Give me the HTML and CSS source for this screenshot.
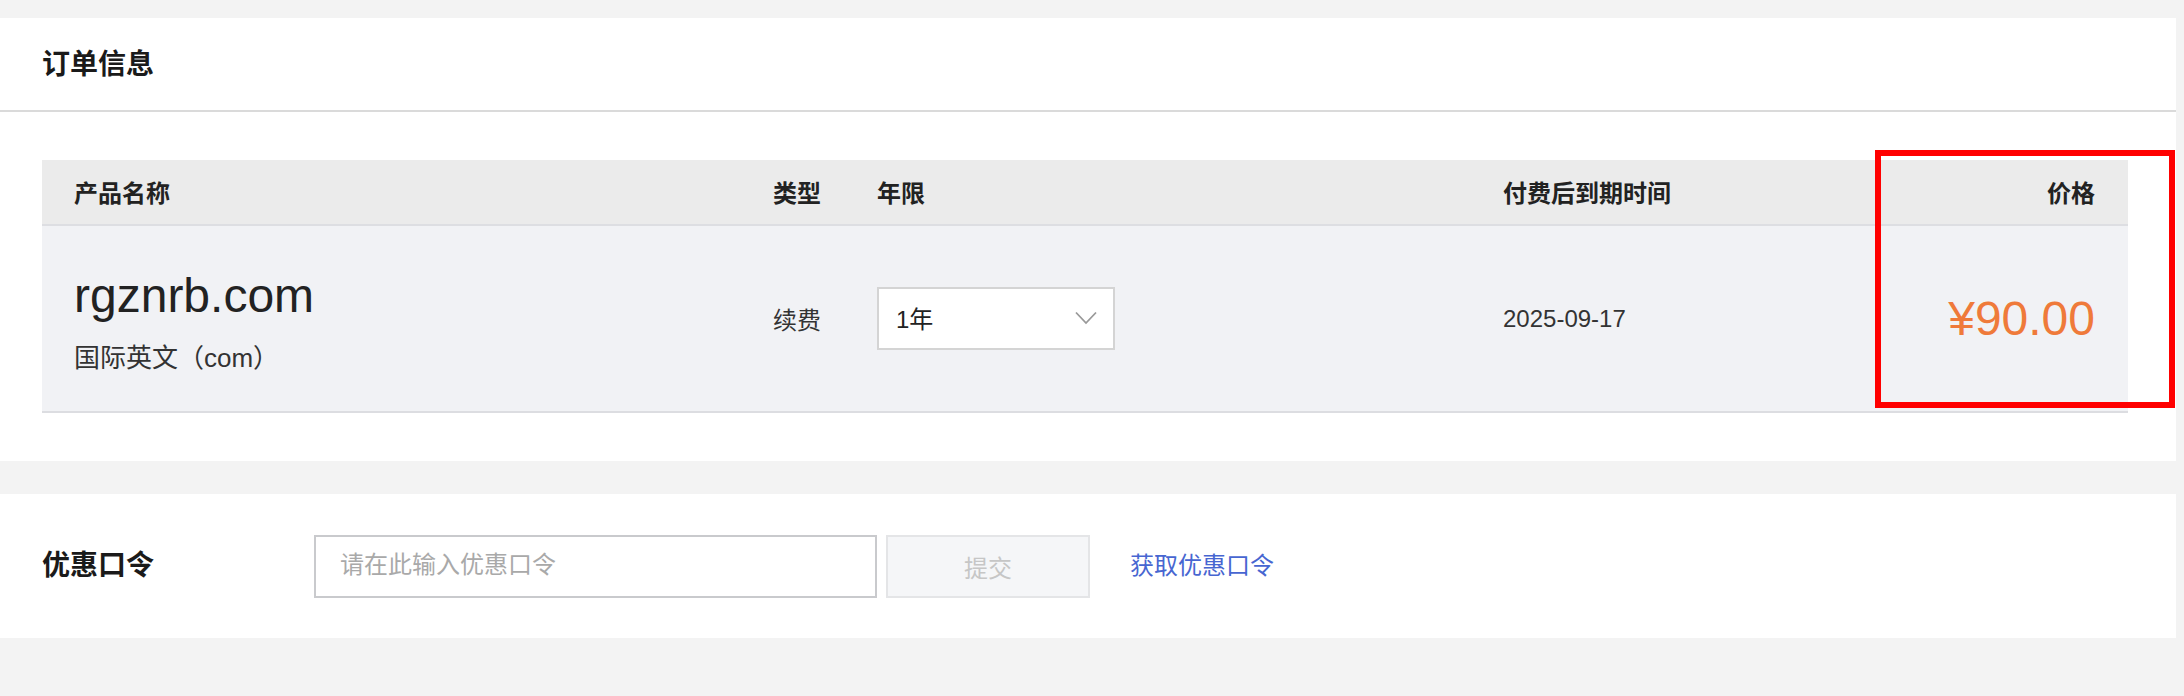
FILE: index.html
```html
<!DOCTYPE html>
<html lang="zh-CN">

<head>
    <meta charset="UTF-8">
    <meta name="viewport" content="width=device-width, initial-scale=1.0">
    <title>订单信息</title>
    <link rel="stylesheet" href="styles.css">
</head>

<body>
    <div class="page">
        <section class="panel">
            <div class="panel-head">
                <h2>订单信息</h2>
            </div>
            <div class="order-body">
                <div class="order-table">
                    <div class="row row-head">
                        <div class="cell">产品名称</div>
                        <div class="cell">类型</div>
                        <div class="cell">年限</div>
                        <div class="cell">付费后到期时间</div>
                        <div class="cell cell-price">价格</div>
                    </div>
                    <div class="row row-item">
                        <div class="cell product">
                            <div class="domain">rgznrb.com</div>
                            <div class="domain-type">国际英文（com）</div>
                        </div>
                        <div class="cell">续费</div>
                        <div class="cell">
                            <div class="select">
                                <span>1年</span>
                                <svg width="22" height="14" viewBox="0 0 22 14">
                                    <polyline points="1,1.5 11,12 21,1.5" fill="none" stroke="#999" stroke-width="1.8"/>
                                </svg>
                            </div>
                        </div>
                        <div class="cell">2025-09-17</div>
                        <div class="cell cell-price"><span class="price">¥90.00</span></div>
                    </div>
                    <!-- red mark around the price column -->
                    <div class="highlight"></div>
                </div>
            </div>
        </section>

        <section class="panel coupon">
            <div class="coupon-label">优惠口令</div>
            <input class="coupon-input" type="text" placeholder="请在此输入优惠口令">
            <button class="coupon-btn" disabled>提交</button>
            <a class="coupon-link" href="#">获取优惠口令</a>
        </section>
    </div>
</body>

</html>
```

FILE: styles.css
```css
html, body {
    background-color: #f3f3f3;
}

body {
    margin: 0;
    font-family: "Liberation Sans", "Noto Sans CJK SC", sans-serif;
    color: #333;
}

.page {
    padding: 18px 8px 0 0;
}

.panel {
    background-color: #fff;
}

.panel-head {
    height: 92px;
    display: flex;
    align-items: center;
    padding-left: 42px;
    border-bottom: 2px solid #dadada;
}

.panel-head h2 {
    margin: 0 0 5px;
    font-size: 28px;
    font-weight: bold;
    color: #1a1a1a;
}

.order-body {
    padding: 48px 48px 48px 42px;
}

.order-table {
    position: relative;
}

.row {
    display: grid;
    grid-template-columns: 699px 104px 626px 292px 1fr;
    align-items: center;
    padding: 0 33px 0 32px;
    font-size: 24px;
}

.row-head {
    height: 64px;
    background-color: #ebebeb;
    border-bottom: 2px solid #dddee2;
    font-weight: bold;
    color: #222;
}

.row-head .cell {
    margin-bottom: 2px;
}

.row-item {
    height: 185px;
    background-color: #f1f2f5;
    border-bottom: 2px solid #dcdde1;
    color: #333;
}

.cell-price {
    text-align: right;
}

.product {
    padding-top: 6px;
}

.domain {
    font-size: 48px;
    line-height: 56px;
    color: #222;
}

.domain-type {
    margin-top: 16px;
    font-size: 26px;
    line-height: 36px;
    color: #333;
}

.select {
    width: 238px;
    height: 63px;
    box-sizing: border-box;
    border: 2px solid #d4d4d4;
    background-color: #fff;
    display: flex;
    align-items: center;
    justify-content: space-between;
    padding: 0 16px 2px 17px;
    color: #222;
}

.price {
    font-size: 48px;
    color: #ef7a3a;
}

.highlight {
    position: absolute;
    top: -10px;
    right: -47px;
    width: 300px;
    height: 258px;
    box-sizing: border-box;
    border: 6px solid #ff0000;
}

.coupon {
    margin-top: 33px;
    height: 144px;
    display: flex;
    align-items: center;
    padding-left: 42px;
}

.coupon-label {
    width: 272px;
    margin-bottom: 6px;
    font-size: 28px;
    font-weight: bold;
    color: #1a1a1a;
}

.coupon-input {
    width: 563px;
    height: 63px;
    box-sizing: border-box;
    border: 2px solid #c9cacd;
    padding: 0 24px 2px;
    font-family: inherit;
    font-size: 24px;
    outline: none;
}

.coupon-input::placeholder {
    color: #a9a9a9;
}

.coupon-btn {
    margin-left: 9px;
    width: 204px;
    height: 63px;
    border: 2px solid #e4e5e7;
    background-color: #f5f6f8;
    color: #c6c6c6;
    font-family: inherit;
    font-size: 24px;
}

.coupon-link {
    margin-left: 40px;
    margin-bottom: 5px;
    color: #4766d1;
    font-size: 24px;
    text-decoration: none;
}
```
